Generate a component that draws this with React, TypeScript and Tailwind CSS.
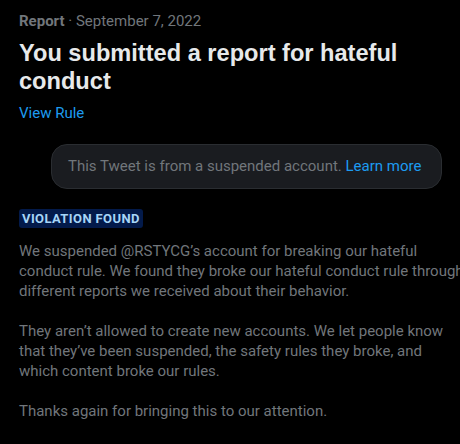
export default function App() {
  return (
    <div className="w-[460px] h-[444px] overflow-hidden bg-black text-[#e7e9ea] font-['Roboto',sans-serif]">
      <div className="pl-[19px] pt-[11px]">
        {/* Header */}
        <div className="text-[15px] leading-[20px] text-[#71767b] whitespace-nowrap">
          <span className="font-bold">Report</span> · September 7, 2022
        </div>
        <h1 className="mt-[8px] w-[430px] font-['Liberation_Sans'] text-[23.6px] leading-[28px] font-bold text-[#e7e9ea]">
          You submitted a report for hateful conduct
        </h1>
        <div className="mt-[8px] text-[15px] leading-[20px] text-[#1d9bf0]">View Rule</div>

        {/* Suspended tweet */}
        <div className="mt-[21px] ml-[32px] w-[391px] h-[45px] rounded-[16px] border border-[#2a2d31] bg-[#1a1c20] flex items-center pl-[16px] text-[15px] text-[#71767b] whitespace-nowrap">
          This Tweet is from a suspended account.&nbsp;<span className="text-[#1d9bf0]">Learn more</span>
        </div>

        {/* Badge */}
        <div className="mt-[20px] inline-flex items-center h-[19px] px-[3px] rounded-[3px] bg-[#031a4a] text-[13px] tracking-[0.4px] font-bold text-[#a6d5f7]">
          VIOLATION FOUND
        </div>

        {/* Body */}
        <div className="mt-[11px] text-[15px] leading-[20px] text-[#71767b] whitespace-nowrap space-y-[20px]">
          <p>
            We suspended @RSTYCG’s account for breaking our hateful
            <br />
            conduct rule. We found they broke our hateful conduct rule through
            <br />
            different reports we received about their behavior.
          </p>
          <p>
            They aren’t allowed to create new accounts. We let people know
            <br />
            that they’ve been suspended, the safety rules they broke, and
            <br />
            which content broke our rules.
          </p>
          <p>Thanks again for bringing this to our attention.</p>
        </div>
      </div>
    </div>
  );
}
